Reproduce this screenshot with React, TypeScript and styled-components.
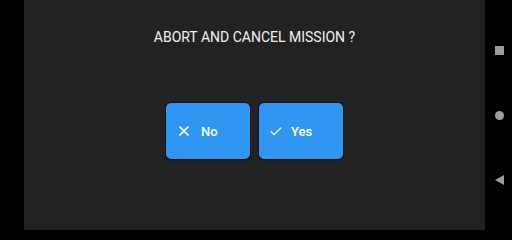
import React from "react";
import styled, { createGlobalStyle } from "styled-components";

const Global = createGlobalStyle`
  html, body { margin: 0; padding: 0; background: #000; }
  body { font-family: Roboto, "Liberation Sans", sans-serif; }
  * { box-sizing: border-box; }
`;

const Screen = styled.div`
  display: flex;
  width: 512px;
  height: 230px;
  background: #000;
`;

const Cutout = styled.div`
  width: 24px;
  flex: none;
  background: #000;
`;

const Panel = styled.main`
  flex: 1;
  background: #222222;
  display: flex;
  flex-direction: column;
  align-items: center;
  padding-top: 29px;
`;

const Title = styled.h1`
  margin: 0;
  font-size: 14px;
  line-height: 16px;
  font-weight: 400;
  color: #f2f2f2;
`;

const ButtonRow = styled.div`
  display: flex;
  gap: 9px;
  margin-top: 58px;
`;

const ActionButton = styled.button<{ $pad: number }>`
  width: 84px;
  height: 56px;
  border: none;
  border-radius: 5px;
  background: #2f97f1;
  box-shadow: 0 0 0 1px rgba(0, 0, 0, 0.45), 0 1px 2px rgba(0, 0, 0, 0.5);
  color: #fff;
  display: flex;
  align-items: center;
  padding: 0 0 0 ${(p) => p.$pad}px;
  font-family: Roboto, "Liberation Sans", sans-serif;
  font-size: 13px;
  font-weight: 500;
  cursor: pointer;
`;

const IconBox = styled.span<{ $gap: number }>`
  width: 12px;
  display: flex;
  align-items: center;
  justify-content: flex-start;
  margin-right: ${(p) => p.$gap}px;
`;

const NavBar = styled.nav`
  width: 27px;
  flex: none;
  background: #000;
  display: flex;
  flex-direction: column;
  align-items: center;
  justify-content: center;
  gap: 55px;
  padding-left: 1px;
`;

const NavSlot = styled.div`
  width: 10px;
  height: 10px;
  display: flex;
  align-items: center;
  justify-content: center;
`;

const NavSquare = styled.div`
  width: 9px;
  height: 9px;
  background: #9c9c9c;
`;

const NavCircle = styled.div`
  width: 9px;
  height: 9px;
  border-radius: 50%;
  background: #9c9c9c;
`;

const CloseIcon = () => (
  <svg width="10" height="10" viewBox="0 0 10 10">
    <path d="M1 1 L9 9 M9 1 L1 9" stroke="#fff" strokeWidth="1.6" strokeLinecap="square" fill="none" />
  </svg>
);

const CheckIcon = () => (
  <svg width="12" height="9" viewBox="0 0 12 9">
    <path d="M0.8 4.5 L4 7.7 L11.2 0.6" stroke="#fff" strokeWidth="1.3" fill="none" />
  </svg>
);

export default function App() {
  return (
    <>
      <Global />
      <Screen>
        <Cutout />
        <Panel>
          <Title>ABORT AND CANCEL MISSION ?</Title>
          <ButtonRow>
            <ActionButton $pad={13}>
              <IconBox $gap={10}>
                <CloseIcon />
              </IconBox>
              No
            </ActionButton>
            <ActionButton $pad={11}>
              <IconBox $gap={9}>
                <CheckIcon />
              </IconBox>
              Yes
            </ActionButton>
          </ButtonRow>
        </Panel>
        <NavBar>
          <NavSlot>
            <NavSquare />
          </NavSlot>
          <NavSlot>
            <NavCircle />
          </NavSlot>
          <NavSlot>
            <svg width="9" height="10" viewBox="0 0 9 10">
              <path d="M0 5 L9 0 L9 10 Z" fill="#9c9c9c" />
            </svg>
          </NavSlot>
        </NavBar>
      </Screen>
    </>
  );
}
